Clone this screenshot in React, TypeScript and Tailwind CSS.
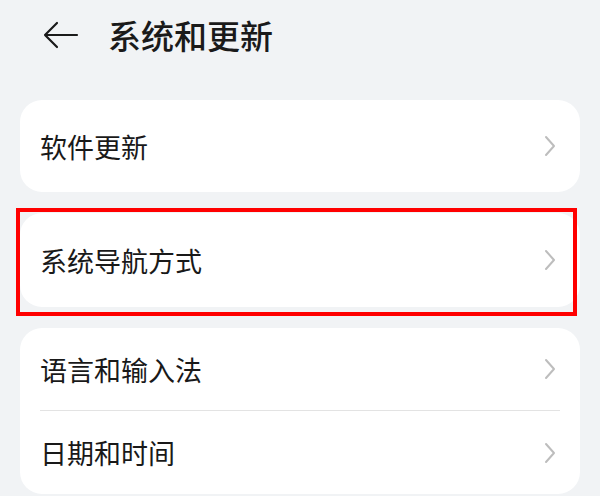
const FONT = "font-['Noto_Sans_CJK_SC','Noto_Sans',sans-serif]";

function Chevron() {
  return (
    <svg width="14" height="22" viewBox="0 0 14 22" fill="none" className="shrink-0">
      <path d="M3 2 L11 11 L3 20" stroke="#bdbdbd" strokeWidth="2" strokeLinecap="round" strokeLinejoin="round" />
    </svg>
  );
}

function Row({ label, className = '' }: { label: string; className?: string }) {
  return (
    <div className={`flex items-center justify-between pl-[20px] pr-[23px] ${className}`}>
      <span className="text-[27px] leading-none text-[#191919]">{label}</span>
      <Chevron />
    </div>
  );
}

export default function App() {
  return (
    <div className={`w-[600px] h-[496px] overflow-hidden bg-[#f1f3f5] ${FONT}`}>
      <div className="flex items-center h-[70px] pl-[43px]">
        <svg width="36" height="28" viewBox="0 0 36 28" fill="none" className="shrink-0">
          <path d="M14 2 L2 14 L14 26 M2 14 H34" stroke="#1a1a1a" strokeWidth="2.2" strokeLinecap="round" strokeLinejoin="round" />
        </svg>
        <h1 className="ml-[29px] text-[33px] leading-none font-medium text-[#1a1a1a]">系统和更新</h1>
      </div>

      <div className="flex flex-col gap-[21px] px-[20px] pt-[30px]">
        <div className="bg-white rounded-[22px]">
          <Row label="软件更新" className="h-[92px]" />
        </div>

        <div className="relative bg-white rounded-[22px]">
          <Row label="系统导航方式" className="h-[94px]" />
          <div className="absolute -left-[4px] -top-[5px] right-[3px] -bottom-[9px] border-4 border-[#ff0000]" />
        </div>

        <div className="bg-white rounded-[22px]">
          <Row label="语言和输入法" className="h-[82px]" />
          <div className="mx-[20px] h-px bg-[#e3e3e3]" />
          <Row label="日期和时间" className="h-[83px]" />
        </div>
      </div>
    </div>
  );
}
